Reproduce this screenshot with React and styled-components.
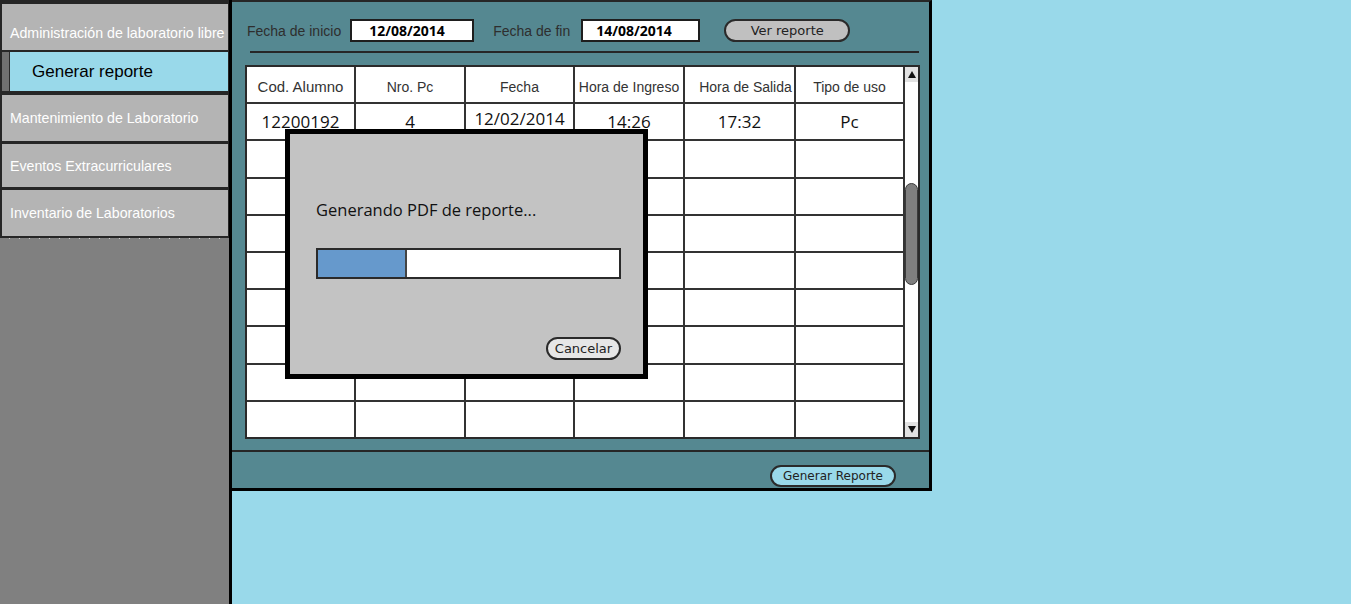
import styled, { createGlobalStyle } from 'styled-components';

const GlobalStyle = createGlobalStyle`
  html, body {
    margin: 0;
    padding: 0;
    background: #99d9ea;
  }
  body {
    font-family: "Liberation Sans", Arial, sans-serif;
  }
`;

const Page = styled.div`
  display: flex;
  align-items: flex-start;
  width: 1351px;
  height: 604px;
  overflow: hidden;
`;

/* ---------- sidebar ---------- */

const Sidebar = styled.aside`
  flex-shrink: 0;
  width: 229px;
  height: 604px;
  background: #808080;
  border-right: 3px solid #000;
`;

const NavGroup = styled.nav`
  display: flex;
  flex-direction: column;
  background: #262626;
  padding: 4px 1px 2px 2px;
`;

const NavItem = styled.div`
  display: flex;
  align-items: center;
  box-sizing: border-box;
  height: ${p => p.$h}px;
  margin-top: ${p => p.$mt || 0}px;
  padding: ${p => p.$pt || 0}px 0 0 8px;
  background: #b4b4b4;
  color: #fff;
  font-size: 14.2px;
  white-space: nowrap;
  overflow: hidden;
`;

const SubItem = styled.div`
  display: flex;
  height: 39px;
  margin-top: 2px;
`;

const SubStrip = styled.div`
  width: 7px;
  background: #707070;
  border-right: 1px solid #2a2a2a;
`;

const SubLabel = styled.div`
  flex: 1;
  display: flex;
  align-items: center;
  padding-left: 22px;
  background: #99d9ea;
  color: #000;
  font-size: 17px;
`;

const Dots = styled.div`
  height: 1px;
  margin-left: 9px;
  background: repeating-linear-gradient(to right, #d0d0d0 0 1px, transparent 1px 10px);
`;

/* ---------- main panel ---------- */

const Panel = styled.main`
  position: relative;
  display: flex;
  flex-direction: column;
  width: 697px;
  background: #558891;
  border-top: 2px solid #262626;
  border-right: 3px solid #000;
  border-bottom: 3px solid #000;
`;

const Toolbar = styled.div`
  display: flex;
  align-items: center;
  height: 23px;
  padding: 17px 0 0 15px;
`;

const FieldLabel = styled.span`
  margin-left: ${p => p.$ml || 0}px;
  color: #2e2e2e;
  font-size: 14px;
`;

const DateBox = styled.div`
  box-sizing: border-box;
  width: ${p => p.$w}px;
  height: 23px;
  margin-left: ${p => p.$ml}px;
  padding-left: ${p => p.$pl}px;
  border: 2px solid #1e1e1e;
  background: #fff;
  color: #000;
  font-family: "Open Sans", sans-serif;
  font-weight: 700;
  font-size: 14px;
  line-height: 20px;
`;

const Pill = styled.button`
  box-sizing: border-box;
  width: ${p => p.$w}px;
  height: ${p => p.$h}px;
  margin-left: ${p => p.$ml || 0}px;
  padding: 0;
  border: 2px solid #2a2a2a;
  border-radius: 12px;
  background: ${p => p.$bg};
  color: #222;
  font-family: "DejaVu Sans", sans-serif;
  font-size: ${p => p.$fs || 13}px;
  line-height: 1;
`;

const Divider = styled.div`
  height: 2px;
  margin: 9px 10px 0 18px;
  background: #262626;
`;

const TableWrap = styled.div`
  box-sizing: border-box;
  display: flex;
  width: 675px;
  height: 374px;
  margin: 12px 0 0 13px;
  border: 2px solid #2a2a2a;
  background: #fff;
`;

const Grid = styled.div`
  display: grid;
  grid-template-columns: 107px 108px 107px 108px 109px 107px;
  grid-template-rows: repeat(10, 1fr);
  gap: 2px;
  width: 656px;
  background: #333;
  border-right: 2px solid #333;
`;

const HeadCell = styled.div`
  display: flex;
  align-items: center;
  justify-content: center;
  padding: 4px 0 0 ${p => p.$pl || 0}px;
  background: #fff;
  color: #333;
  font-size: ${p => p.$fs || 14}px;
  white-space: nowrap;
  overflow: hidden;
`;

const Cell = styled.div`
  display: flex;
  align-items: center;
  justify-content: center;
  padding-bottom: ${p => p.$pb || 0}px;
  background: #fff;
  color: #111;
  font-family: "Open Sans", sans-serif;
  font-size: 17px;
`;

const Scroll = styled.div`
  flex: 1;
  display: flex;
  flex-direction: column;
  background: #fff;
`;

const ScrollArrow = styled.div`
  display: flex;
  align-items: center;
  justify-content: center;
  height: 15px;
  margin-top: ${p => (p.$bottom ? 'auto' : '0')};
  background: #e2e2e2;
`;

const Thumb = styled.div`
  box-sizing: border-box;
  height: 102px;
  margin-top: 101px;
  border: 1px solid #3a3a3a;
  border-radius: 7px;
  background: #7f7f7f;
`;

const Footer = styled.footer`
  display: flex;
  justify-content: flex-end;
  margin-top: 11px;
  padding: 13px 33px 1px 0;
  border-top: 2px solid #262626;
`;

/* ---------- modal ---------- */

const Modal = styled.div`
  position: absolute;
  left: 53px;
  top: 127px;
  box-sizing: border-box;
  display: flex;
  flex-direction: column;
  width: 363px;
  height: 250px;
  padding: 66px 22px 14px 26px;
  border: 5px solid #000;
  background: #c3c3c3;
`;

const ModalText = styled.div`
  color: #111;
  font-family: "Open Sans", sans-serif;
  font-size: 16.5px;
  line-height: 20px;
`;

const Progress = styled.div`
  box-sizing: border-box;
  display: flex;
  height: 31px;
  margin-top: 28px;
  border: 2px solid #2a2a2a;
  background: #fff;
`;

const ProgressFill = styled.div`
  background: #6699cc;
  border-right: 2px solid #444;
`;

const ModalActions = styled.div`
  display: flex;
  justify-content: flex-end;
  margin-top: auto;
`;

const Arrow = ({ down }) => (
  <svg width="8" height="7" viewBox="0 0 8 7">
    <path d={down ? 'M0 0 L8 0 L4 7 Z' : 'M0 7 L8 7 L4 0 Z'} fill="#111" />
  </svg>
);

const headers = [
  { t: 'Cod. Alumno', fs: 15 },
  { t: 'Nro. Pc' },
  { t: 'Fecha' },
  { t: 'Hora de Ingreso' },
  { t: 'Hora de Salida', pl: 12 },
  { t: 'Tipo de uso' },
];

const rows = [['12200192', '4', '12/02/2014', '14:26', '17:32', 'Pc']];
while (rows.length < 9) rows.push(['', '', '', '', '', '']);

const progress = 29;

export default function App() {
  return (
    <>
      <GlobalStyle />
      <Page>
        <Sidebar>
          <NavGroup>
            <NavItem $h={46} $pt={12}>Administración de laboratorio libre</NavItem>
            <SubItem>
              <SubStrip />
              <SubLabel>Generar reporte</SubLabel>
            </SubItem>
            <NavItem $h={46} $mt={4}>Mantenimiento de Laboratorio</NavItem>
            <NavItem $h={43} $mt={3}>Eventos Extracurriculares</NavItem>
            <NavItem $h={46} $mt={3}>Inventario de Laboratorios</NavItem>
          </NavGroup>
          <Dots />
        </Sidebar>

        <Panel>
          <Toolbar>
            <FieldLabel>Fecha de inicio</FieldLabel>
            <DateBox $w={124} $ml={9} $pl={17}>12/08/2014</DateBox>
            <FieldLabel $ml={19}>Fecha de fin</FieldLabel>
            <DateBox $w={119} $ml={11} $pl={13}>14/08/2014</DateBox>
            <Pill $w={126} $h={23} $ml={24} $bg="#c0c0c0">Ver reporte</Pill>
          </Toolbar>
          <Divider />

          <TableWrap>
            <Grid>
              {headers.map(h => (
                <HeadCell key={h.t} $fs={h.fs} $pl={h.pl}>{h.t}</HeadCell>
              ))}
              {rows.map((r, i) =>
                r.map((v, j) => (
                  <Cell key={i + '-' + j} $pb={j === 2 && v ? 6 : 0}>{v}</Cell>
                ))
              )}
            </Grid>
            <Scroll>
              <ScrollArrow><Arrow /></ScrollArrow>
              <Thumb />
              <ScrollArrow $bottom><Arrow down /></ScrollArrow>
            </Scroll>
          </TableWrap>

          <Footer>
            <Pill $w={126} $h={22} $fs={12} $bg="#99d9ea">Generar Reporte</Pill>
          </Footer>

          <Modal>
            <ModalText>Generando PDF de reporte...</ModalText>
            <Progress>
              <ProgressFill style={{ width: progress + '%' }} />
            </Progress>
            <ModalActions>
              <Pill $w={75} $h={23} $bg="#e6e6e6">Cancelar</Pill>
            </ModalActions>
          </Modal>
        </Panel>
      </Page>
    </>
  );
}
